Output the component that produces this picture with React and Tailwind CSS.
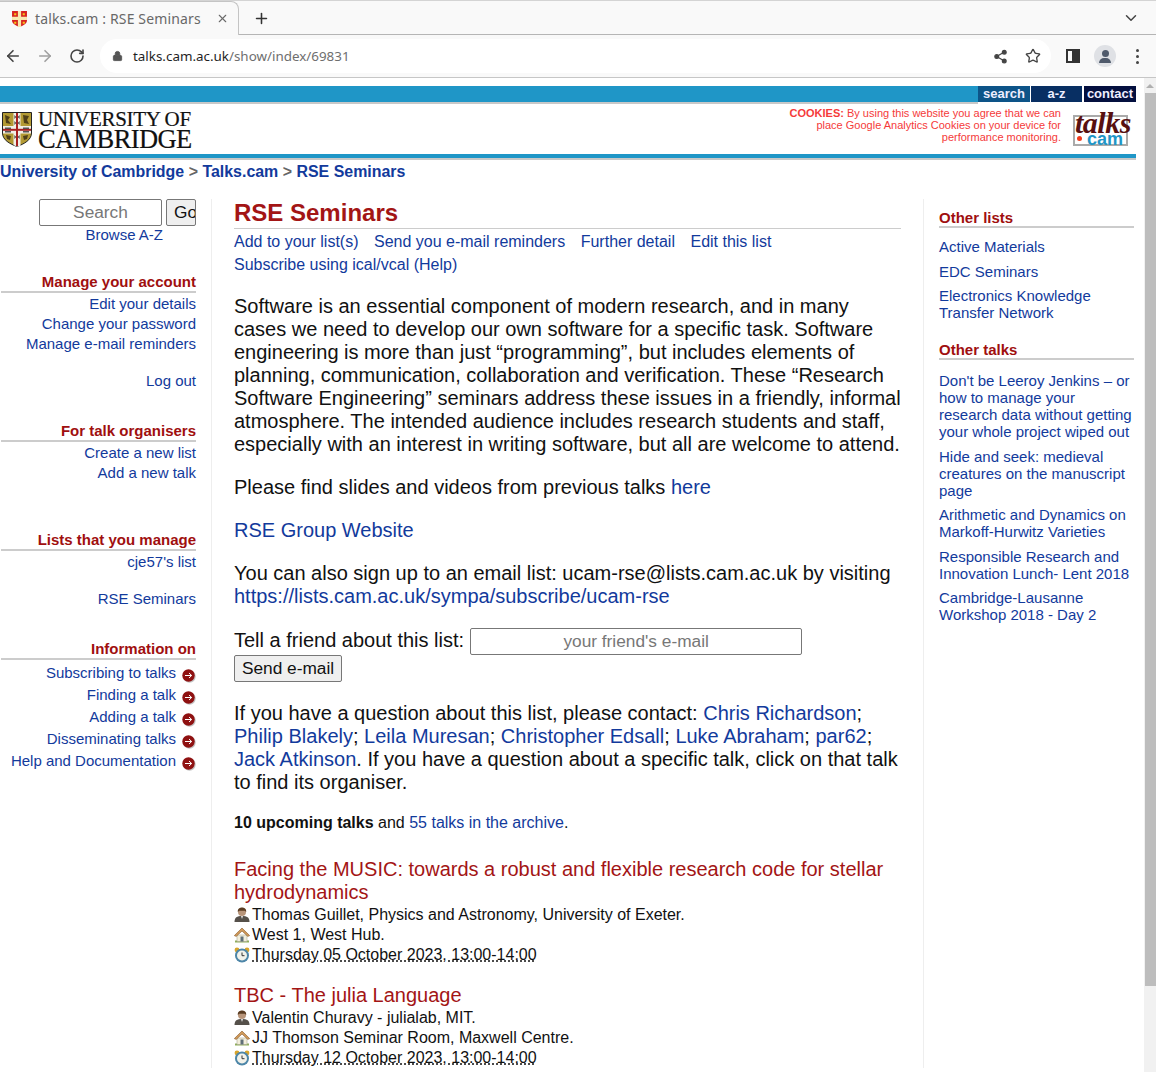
import React from "react";
import { ArrowLeft, ArrowRight, RotateCw, Lock, Share2, Star, ChevronDown, Plus, X } from "lucide-react";

const SANS = { fontFamily: '"Liberation Sans", Arial, sans-serif' };

const link = "text-[#123a9c]";

// crest of the university, drawn small
const Shield = ({ className }) => (
  <svg viewBox="0 0 30 35" className={className}>
    <path d="M0.5 0.5H29.5V21C29.5 28 22 32 15 34.5C8 32 0.5 28 0.5 21Z" fill="#b39a34" stroke="#222" strokeWidth="1" />
    <path d="M1 14H29V21.5H1Z" fill="#f2f0e8" />
    <path d="M11.5 1H18.5V34L15 34.5L11.5 33Z" fill="#f2f0e8" />
    <path d="M1 16.8H29V18.8H1Z" fill="#a82020" />
    <path d="M14 1H16V34H14Z" fill="#a82020" />
    <path d="M3 3L8 5L6 8L9 12L4 11Z M21 3L27 4L25 8L27 12L22 11Z M4 23L9 24L8 28L5 27Z M21 24L26 23L25 27L22 28Z" fill="#4f3f18" />
    <path d="M12.5 3L14 5L12.5 7Z M17.5 3L16 5L17.5 7Z M12.5 9L14 11L12.5 13Z M17.5 9L16 11L17.5 13Z M12.5 23L14 25L12.5 27Z M17.5 23L16 25L17.5 27Z" fill="#222" />
    <path d="M3 15.5H9V17H3Z M21 15.5H27V17H21Z M3 19H9V20.5H3Z M21 19H27V20.5H21Z" fill="#555" />
  </svg>
);

const GoIcon = () => (
  <svg viewBox="0 0 15 15" className="w-[15px] h-[15px] shrink-0">
    <circle cx="8.5" cy="8.5" r="6.2" fill="#c4c4c4" />
    <circle cx="7.5" cy="7.5" r="6.2" fill="#8f1111" />
    <path d="M4 7.5H10.5M8 5L10.7 7.5L8 10" fill="none" stroke="#fff" strokeWidth="1" />
  </svg>
);

const PersonIcon = () => (
  <svg viewBox="0 0 16 16" className="w-4 h-4 shrink-0">
    <path d="M0.5 15C0.5 10.5 3 9 8 9C13 9 15.5 10.5 15.5 15Z" fill="#55504a" />
    <circle cx="8" cy="5" r="4" fill="#b8957a" />
    <path d="M3.8 5C3.5 1.5 6 0.5 8 0.5C10 0.5 12.5 1.5 12.2 5L10.8 3.8H5.2Z" fill="#5a3c22" />
    <path d="M6.8 9L8 12L9.2 9Z" fill="#d8d8d8" />
  </svg>
);

const HouseIcon = () => (
  <svg viewBox="0 0 16 16" className="w-4 h-4 shrink-0">
    <path d="M1 13.5H15V15.5H1Z" fill="#8fae5a" />
    <path d="M3 8H13V14.5H3Z" fill="#f2eedc" stroke="#9a9a80" strokeWidth="0.5" />
    <path d="M0.3 8.6L8 1L15.7 8.6L13.8 9.4L8 4L2.2 9.4Z" fill="#d09a5a" stroke="#8a5a2a" strokeWidth="0.6" />
    <path d="M6.5 9.5H9.5V14.5H6.5Z" fill="#5f6f78" />
  </svg>
);

const ClockIcon = () => (
  <svg viewBox="0 0 16 16" className="w-4 h-4 shrink-0">
    <circle cx="3" cy="3" r="2.4" fill="#d8a52c" />
    <circle cx="13" cy="3" r="2.4" fill="#d8a52c" />
    <circle cx="8" cy="8.5" r="7" fill="#4d86a8" />
    <circle cx="8" cy="8.5" r="5" fill="#f2f2ea" />
    <path d="M8 5.5V8.7H10.5" fill="none" stroke="#333" strokeWidth="1" />
  </svg>
);

const BrowserChrome = () => (
  <div className="h-[78px] border-b border-[#c6c6c6] bg-[#f9f9f9]">
    {/* tab strip */}
    <div className="h-[35px] flex items-end border-t border-[#d4d4d4] relative">
      <div className="absolute left-0 right-0 bottom-0 h-px bg-[#b5b5b5]" />
      <div className="relative z-10 w-[239px] h-[34px] flex items-center bg-[#f9f9f9] rounded-tr-[8px] border-r border-t border-[#c4c4c4] pl-[12px]">
        <svg viewBox="0 0 14 15" className="w-[15px] h-[16px]">
          <path d="M0 0H14V9C14 12 10 14 7 15C4 14 0 12 0 9Z" fill="#d8231f" />
          <path d="M5.5 0H8.5V15H5.5Z M0 5.5H14V8.5H0Z" fill="#f8e9b0" />
          <path d="M2 2H4V4H2Z M10 2H12V4H10Z M2 10H4V12H2Z M10 10H12V12H10Z" fill="#f5c518" />
        </svg>
        <span className="ml-[8px] text-[14px] text-[#686868] whitespace-nowrap" style={{ fontFamily: '"Noto Sans", sans-serif', letterSpacing: "0.15px" }}>
          talks.cam : RSE Seminars
        </span>
        <X className="w-[13px] h-[13px] ml-auto mr-[9px] text-[#6a6a6a]" strokeWidth={2} />
      </div>
      <div className="relative z-10 h-[34px] flex items-center ml-[14px]">
        <Plus className="w-[17px] h-[17px] text-[#333]" strokeWidth={2.2} />
      </div>
      <div className="relative z-10 h-[34px] flex items-center ml-auto mr-[16px]">
        <ChevronDown className="w-[18px] h-[18px] text-[#444]" strokeWidth={2} />
      </div>
    </div>
    {/* address bar */}
    <div className="h-[42px] flex items-center">
      <ArrowLeft className="w-[18px] h-[18px] ml-[4px] text-[#444]" strokeWidth={2.2} />
      <ArrowRight className="w-[18px] h-[18px] ml-[14px] text-[#a0a0a0]" strokeWidth={2.2} />
      <RotateCw className="w-[16px] h-[16px] ml-[15px] text-[#444]" strokeWidth={2.4} />
      <div className="ml-[15px] w-[951px] h-[34px] rounded-full bg-white flex items-center pl-[12px]">
        <Lock className="w-[11px] h-[12px] text-[#555]" fill="#555" strokeWidth={2} />
        <span className="ml-[10px] text-[13.4px] whitespace-nowrap" style={{ fontFamily: '"Noto Sans", sans-serif' }}>
          <span className="text-[#1f1f1f]">talks.cam.ac.uk</span>
          <span className="text-[#6e6e6e]">/show/index/69831</span>
        </span>
        <Share2 className="w-[15px] h-[15px] ml-auto text-[#444]" fill="#444" strokeWidth={2} />
        <Star className="w-[16px] h-[16px] ml-[17px] mr-[10px] text-[#444]" strokeWidth={2} />
      </div>
      <div className="ml-[15px] w-[14px] h-[14px] border-[2px] border-[#333] flex justify-end">
        <div className="w-[6px] bg-[#333]" />
      </div>
      <div className="ml-[14px] w-[22px] h-[22px] rounded-full bg-[#dfe1e5] flex flex-col items-center justify-center">
        <div className="w-[7px] h-[7px] rounded-full bg-[#4f5a6b]" />
        <div className="w-[12px] h-[5px] rounded-t-[5px] bg-[#4f5a6b] mt-[1px]" />
      </div>
      <div className="ml-[20px] flex flex-col gap-[3px]">
        <div className="w-[3px] h-[3px] rounded-full bg-[#444]" />
        <div className="w-[3px] h-[3px] rounded-full bg-[#444]" />
        <div className="w-[3px] h-[3px] rounded-full bg-[#444]" />
      </div>
    </div>
  </div>
);

const Header = () => (
  <div>
    <div className="h-[16px] mt-[8px] mr-[20px] bg-[#1f96c7] flex justify-end">
      <div className="flex h-[18px] gap-px bg-white">
        <div className="w-[52px] h-[16px] bg-[#0d5488] text-[#eef] text-[13px] font-bold text-center leading-[16px]">search</div>
        <div className="w-[51px] h-[16px] bg-[#082f63] text-[#eef] text-[13px] font-bold text-center leading-[16px]">a-z</div>
        <div className="w-[52px] h-[16px] ml-px bg-[#04103f] text-[#eef] text-[13px] font-bold text-center leading-[16px]">contact</div>
      </div>
    </div>
    <div className="h-[2px] bg-[#c8c8c8] mr-[20px]" />
    <div className="h-[50px] flex">
      <Shield className="w-[30px] h-[35px] mt-[8px] ml-[2px]" />
      <div className="ml-[6px] mt-[5px] text-[#111] [-webkit-text-stroke:0.2px_#111]" style={{ fontFamily: '"Liberation Serif", serif' }}>
        <div className="text-[21px] leading-[20px] tracking-[-0.35px] whitespace-nowrap">UNIVERSITY OF</div>
        <div className="text-[26.5px] leading-[21px] tracking-[-0.6px] whitespace-nowrap">CAMBRIDGE</div>
      </div>
      <div className="ml-auto mt-[3px] w-[275px] text-right text-[11px] leading-[12px] text-[#f53a3a]">
        <b>COOKIES:</b> By using this website you agree that we can place Google Analytics Cookies on your device for performance monitoring.
      </div>
      <div className="w-[75px] relative shrink-0">
        <div className="absolute left-[12px] top-[11px] w-[55px] h-[31px] border-[2px] border-[#aaa]" />
        <div className="absolute left-[14px] top-[7px] text-[30px] leading-[24px] italic font-bold text-[#581010] tracking-[-0.5px]" style={{ fontFamily: '"Liberation Serif", serif' }}>talks</div>
        <div className="absolute left-[16px] top-[32px] w-[5px] h-[5px] rounded-full bg-[#f03a1a]" />
        <div className="absolute left-[26px] top-[28px] text-[18px] leading-[14px] font-bold text-[#1f96c7]">cam</div>
      </div>
      <div className="w-[20px] shrink-0" />
    </div>
    <div className="h-[4px] bg-[#1f96c7] mr-[20px]" />
    <div className="h-[2px] bg-[#c8c8c8] mr-[20px]" />
    <div className="mt-[2px] text-[15.95px] leading-[20px] font-bold text-[#666]">
      <span className={link}>University of Cambridge</span> &gt; <span className={link}>Talks.cam</span> &gt; <span className={link}>RSE Seminars</span>
    </div>
  </div>
);

const SideHead = ({ children, className = "" }) => (
  <div className={`text-[15px] leading-[17px] font-bold text-[#a00f0f] text-right border-b-2 border-[#ccc] pb-[1px] ${className}`}>{children}</div>
);

const LeftColumn = () => (
  <div className="w-[212px] shrink-0 border-r border-[#eee] pr-[15px] pl-[1px] text-right text-[15px] leading-[20px] text-[#123a9c]">
    <div className="flex justify-end gap-[4px] h-[27px] text-[17.3px]">
      <div className="w-[123px] h-[27px] border border-[#777] rounded-[2px] text-center text-[#777] leading-[25px]">Search</div>
      <div className="w-[30px] h-[27px] border border-[#777] rounded-[2px] bg-[#efefef] text-[#111] text-left pl-[7px] leading-[25px] overflow-hidden">Go</div>
    </div>
    <div className="pr-[33px] leading-[17px]">Browse A-Z</div>

    <SideHead className="mt-[30px]">Manage your account</SideHead>
    <div className="mt-[1px]">Edit your details</div>
    <div>Change your password</div>
    <div>Manage e-mail reminders</div>
    <div className="mt-[17px]">Log out</div>

    <SideHead className="mt-[31px]">For talk organisers</SideHead>
    <div className="mt-[1px]">Create a new list</div>
    <div>Add a new talk</div>

    <SideHead className="mt-[48px]">Lists that you manage</SideHead>
    <div className="mt-[1px]">cje57's list</div>
    <div className="mt-[17px]">RSE Seminars</div>

    <SideHead className="mt-[31px]">Information on</SideHead>
    <div className="mt-[1px]">
      {["Subscribing to talks", "Finding a talk", "Adding a talk", "Disseminating talks", "Help and Documentation"].map((item) => (
        <div key={item} className="flex justify-end items-end h-[22px] gap-[5px]">
          <span>{item}</span>
          <GoIcon />
        </div>
      ))}
    </div>
  </div>
);

const Talk = ({ title, who, where, when, className = "" }) => (
  <div className={className}>
    <div className="text-[20px] leading-[23px] text-[#a31515]">{title}</div>
    <div className="mt-[1px] text-[16px] leading-[20px] text-[#111]">
      <div className="flex items-center h-[20px] gap-[2px]"><PersonIcon />{who}</div>
      <div className="flex items-center h-[20px] gap-[2px]"><HouseIcon />{where}</div>
      <div className="flex items-center h-[20px] gap-[2px]">
        <ClockIcon />
        <span className="underline decoration-dotted">{when}</span>
      </div>
    </div>
  </div>
);

const MainColumn = () => (
  <div className="w-[711px] shrink-0 pl-[22px] pr-[22px] text-[20px] leading-[23px] text-[#111]">
    <div className="text-[24px] leading-[28px] pb-[1px] font-bold text-[#a31515] border-b border-[#ccc]">RSE Seminars</div>
    <div className="text-[16px] leading-[23px] text-[#123a9c] mt-[1px]">
      <div className="flex gap-[15.5px]">
        <span>Add to your list(s)</span>
        <span>Send you e-mail reminders</span>
        <span>Further detail</span>
        <span>Edit this list</span>
      </div>
      <div>Subscribe using ical/vcal (Help)</div>
    </div>

    <p className="mt-[19px]">
      Software is an essential component of modern research, and in many cases we need to develop our own software for a specific task. Software engineering is more than just “programming”, but includes elements of planning, communication, collaboration and verification. These “Research Software Engineering” seminars address these issues in a friendly, informal atmosphere. The intended audience includes research students and staff, especially with an interest in writing software, but all are welcome to attend.
    </p>
    <p className="mt-[20px]">Please find slides and videos from previous talks <span className={link}>here</span></p>
    <p className={`mt-[20px] ${link}`}>RSE Group Website</p>
    <p className="mt-[20px]">
      You can also sign up to an email list: ucam-rse@lists.cam.ac.uk by visiting <span className={link}>https://lists.cam.ac.uk/sympa/subscribe/ucam-rse</span>
    </p>

    <div className="mt-[19px] flex items-center h-[27px]">
      <span className="whitespace-nowrap">Tell a friend about this list:</span>
      <div className="ml-[6px] mt-[2px] w-[332px] h-[27px] border border-[#777] rounded-[2px] text-center text-[17.3px] leading-[25px] text-[#777]">your friend's e-mail</div>
    </div>
    <div className="mt-[1px] w-[108px] h-[27px] border border-[#777] bg-[#efefef] rounded-[2px] text-center text-[17.3px] leading-[25px] text-[#111]">Send e-mail</div>

    <p className="mt-[20px]">
      If you have a question about this list, please contact: <span className={link}>Chris Richardson</span>; <span className={link}>Philip Blakely</span>; <span className={link}>Leila Muresan</span>; <span className={link}>Christopher Edsall</span>; <span className={link}>Luke Abraham</span>; <span className={link}>par62</span>; <span className={link}>Jack Atkinson</span>. If you have a question about a specific talk, click on that talk to find its organiser.
    </p>

    <p className="mt-[19px] text-[16px] leading-[20px]">
      <b>10 upcoming talks</b> and <span className={link}>55 talks in the archive</span>.
    </p>

    <Talk
      className="mt-[25px]"
      title="Facing the MUSIC: towards a robust and flexible research code for stellar hydrodynamics"
      who="Thomas Guillet, Physics and Astronomy, University of Exeter."
      where="West 1, West Hub."
      when="Thursday 05 October 2023, 13:00-14:00"
    />
    <Talk
      className="mt-[19px]"
      title="TBC - The julia Language"
      who="Valentin Churavy - julialab, MIT."
      where="JJ Thomson Seminar Room, Maxwell Centre."
      when="Thursday 12 October 2023, 13:00-14:00"
    />
  </div>
);

const RightHead = ({ children, className = "" }) => (
  <div className={`text-[15px] leading-[17px] font-bold text-[#a00f0f] border-b-2 border-[#ccc] ${className}`}>{children}</div>
);

const RightColumn = () => (
  <div className="w-[221px] shrink-0 border-l border-[#eee] pl-[15px] pr-[10px] text-[15px] leading-[17px] text-[#123a9c]">
    <RightHead className="mt-[10px]">Other lists</RightHead>
    <div className="mt-[10px]">Active Materials</div>
    <div className="mt-[8px]">EDC Seminars</div>
    <div className="mt-[7px]">Electronics Knowledge Transfer Network</div>

    <RightHead className="mt-[20px]">Other talks</RightHead>
    <div className="mt-[12px]">Don't be Leeroy Jenkins – or how to manage your research data without getting your whole project wiped out</div>
    <div className="mt-[8px]">Hide and seek: medieval creatures on the manuscript page</div>
    <div className="mt-[7px]">Arithmetic and Dynamics on Markoff-Hurwitz Varieties</div>
    <div className="mt-[8px]">Responsible Research and Innovation Lunch- Lent 2018</div>
    <div className="mt-[7px]">Cambridge-Lausanne Workshop 2018 - Day 2</div>
  </div>
);

export default function App() {
  return (
    <div className="w-[1156px] h-[1072px] overflow-hidden bg-white relative" style={SANS}>
      <BrowserChrome />
      <Header />
      <div className="flex mt-[17px]">
        <LeftColumn />
        <MainColumn />
        <RightColumn />
      </div>
      {/* page scrollbar */}
      <div className="absolute right-0 top-[78px] bottom-0 w-[12px] bg-[#f1f1f1]">
        <div className="w-0 h-0 mx-auto mt-[6px] border-x-[4px] border-x-transparent border-b-[4px] border-b-[#b0b0b0]" />
        <div className="absolute left-[1px] top-[15px] w-[11px] h-[893px] bg-[#bdbdbd]" />
      </div>
    </div>
  );
}
